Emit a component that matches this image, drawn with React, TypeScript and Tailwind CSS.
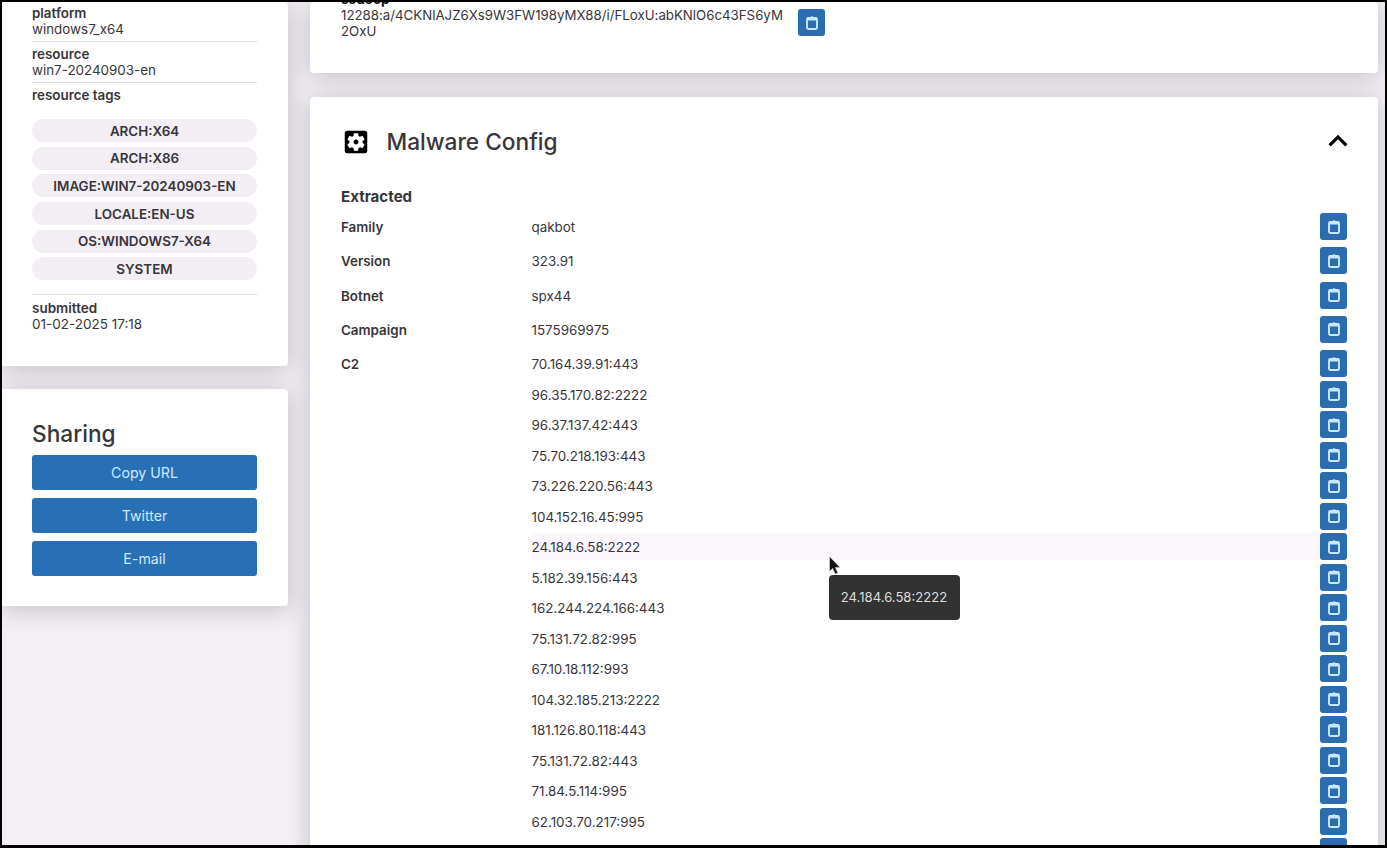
import type { ReactNode } from "react";
import { MdExpandLess, MdSettingsApplications } from "react-icons/md";

const tags = [
  "ARCH:X64",
  "ARCH:X86",
  "IMAGE:WIN7-20240903-EN",
  "LOCALE:EN-US",
  "OS:WINDOWS7-X64",
  "SYSTEM",
];

const fields = [
  { label: "Family", value: "qakbot" },
  { label: "Version", value: "323.91" },
  { label: "Botnet", value: "spx44" },
  { label: "Campaign", value: "1575969975" },
];

const servers = [
  "70.164.39.91:443",
  "96.35.170.82:2222",
  "96.37.137.42:443",
  "75.70.218.193:443",
  "73.226.220.56:443",
  "104.152.16.45:995",
  "24.184.6.58:2222",
  "5.182.39.156:443",
  "162.244.224.166:443",
  "75.131.72.82:995",
  "67.10.18.112:993",
  "104.32.185.213:2222",
  "181.126.80.118:443",
  "75.131.72.82:443",
  "71.84.5.114:995",
  "62.103.70.217:995",
  "",
];

const hovered = "24.184.6.58:2222";

function CopyButton() {
  return (
    <button className="flex size-[27px] shrink-0 items-center justify-center rounded-[3px] bg-[#2a6cae] text-[#c9e8ff]">
      <svg width="14" height="16" viewBox="0 0 14 16" fill="none">
        <rect x="2" y="3" width="10" height="11" rx="1.2" stroke="currentColor" strokeWidth="1.9" />
        <path d="M3 5.5V2.5H5.3Q5.7 1.3 7 1.3T8.7 2.5H11V5.5Z" fill="currentColor" />
      </svg>
    </button>
  );
}

function Card({ className, children }: { className: string; children: ReactNode }) {
  return (
    <section className={`shrink-0 rounded-[4px] bg-white shadow-[0_3px_24px_rgba(40,35,40,0.24)] ${className}`}>
      {children}
    </section>
  );
}

function Sidebar() {
  return (
    <aside className="flex w-[286px] shrink-0 flex-col gap-[23px]">
      <Card className="h-[364px] rounded-l-none pl-[30px] pr-[31px] leading-4">
        <div className="h-[39.5px] border-b border-[#dfdde1] pt-[3px]">
          <div className="font-semibold">platform</div>
          <div>windows7_x64</div>
        </div>
        <div className="h-[41px] border-b border-[#dfdde1] pt-[4.5px]">
          <div className="font-semibold">resource</div>
          <div>win7-20240903-en</div>
        </div>
        <div className="h-[212px] border-b border-[#dfdde1] pt-[4.5px]">
          <div className="font-semibold">resource tags</div>
          <div className="mt-4 flex flex-col gap-[4.7px]">
            {tags.map((tag) => (
              <div key={tag} className="flex h-[23px] items-center justify-center rounded-full bg-[#f2eef4] font-semibold">
                {tag}
              </div>
            ))}
          </div>
        </div>
        <div className="pt-[5px] text-[13.5px]">
          <div className="font-semibold">submitted</div>
          <div>01-02-2025 17:18</div>
        </div>
      </Card>
      <Card className="h-[217px] rounded-l-none pl-[30px] pr-[31px] pt-[31px]">
        <h2 className="text-[22.7px] font-[450] leading-7">Sharing</h2>
        <div className="mt-[7px] flex flex-col gap-2">
          {["Copy URL", "Twitter", "E-mail"].map((label) => (
            <button key={label} className="h-[35px] rounded-[3px] bg-[#2870b6] text-[14.2px] text-[#cfe8ff]">
              {label}
            </button>
          ))}
        </div>
      </Card>
    </aside>
  );
}

function HashCard() {
  return (
    <Card className="h-[71px] px-[31px]">
      <div className="flex">
        <div className="w-[457px] text-[13.28px] leading-4">
          <div className="-mt-[11px] text-[13.6px] font-bold text-[#111]">ssdeep</div>
          <div>12288:a/4CKNlAJZ6Xs9W3FW198yMX88/i/FLoxU:abKNlO6c43FS6yM</div>
          <div>2OxU</div>
        </div>
        <div className="pt-[7px]">
          <CopyButton />
        </div>
      </div>
    </Card>
  );
}

function HoverTip({ text }: { text: string }) {
  return (
    <span className="absolute left-[297px] top-[23px] z-10 block">
      <svg width="12" height="19" viewBox="0 0 12 19" className="block">
        <path
          d="M0.5 0.5V15.5L3.7 12.4L6.2 18L8.8 16.9L6.4 11.4H11Z"
          fill="#111"
          stroke="#ddd"
          strokeWidth="0.6"
        />
      </svg>
      <span className="flex h-[45px] w-[131px] items-center justify-center rounded-[4px] bg-[#323232] text-[13.1px] text-[#dedede]">
        {text}
      </span>
    </span>
  );
}

function ConfigCard() {
  return (
    <Card className="h-[760px] px-[31px] pt-[29px]">
      <header className="flex h-8 items-center">
        <MdSettingsApplications size={30} className="text-black" />
        <h2 className="ml-[15.5px] flex-1 pt-px text-[22.7px] font-[450]">Malware Config</h2>
        <MdExpandLess size={38} className="-mr-[10px] -mt-[2px] text-black" />
      </header>
      <h3 className="mt-[30px] text-[15.1px] font-bold leading-[18px]">Extracted</h3>
      <dl className="mt-[7px]">
        {fields.map(({ label, value }) => (
          <div key={label} className="flex h-[34.3px] items-start">
            <dt className="w-[190.5px] font-semibold leading-[29px]">{label}</dt>
            <dd className="flex-1 leading-[29px]">{value}</dd>
            <CopyButton />
          </div>
        ))}
        <div className="flex items-start">
          <dt className="w-[190.5px] font-semibold leading-[28px]">C2</dt>
          <dd className="flex flex-1 flex-col gap-[3.5px]">
            {servers.map((server, i) => (
              <div key={i} className="flex h-[27px] shrink-0 items-center">
                <span
                  className={
                    server === hovered
                      ? "relative flex h-[27px] flex-1 items-center bg-[#faf6fc] pt-[1.6px]"
                      : "flex h-[27px] flex-1 items-center pt-[1.6px]"
                  }
                >
                  {server}
                  {server === hovered && <HoverTip text={server} />}
                </span>
                <CopyButton />
              </div>
            ))}
          </dd>
        </div>
      </dl>
    </Card>
  );
}

export default function App() {
  return (
    <div className="h-[848px] w-[1387px] overflow-hidden border-2 border-b-[3px] border-black bg-[#f3eff5] font-['Inter',sans-serif] text-[13.4px] text-[#38353b]">
      <div className="flex h-full gap-[22px] overflow-hidden">
        <Sidebar />
        <main className="flex w-[1068px] shrink-0 flex-col gap-6">
          <HashCard />
          <ConfigCard />
        </main>
      </div>
    </div>
  );
}
